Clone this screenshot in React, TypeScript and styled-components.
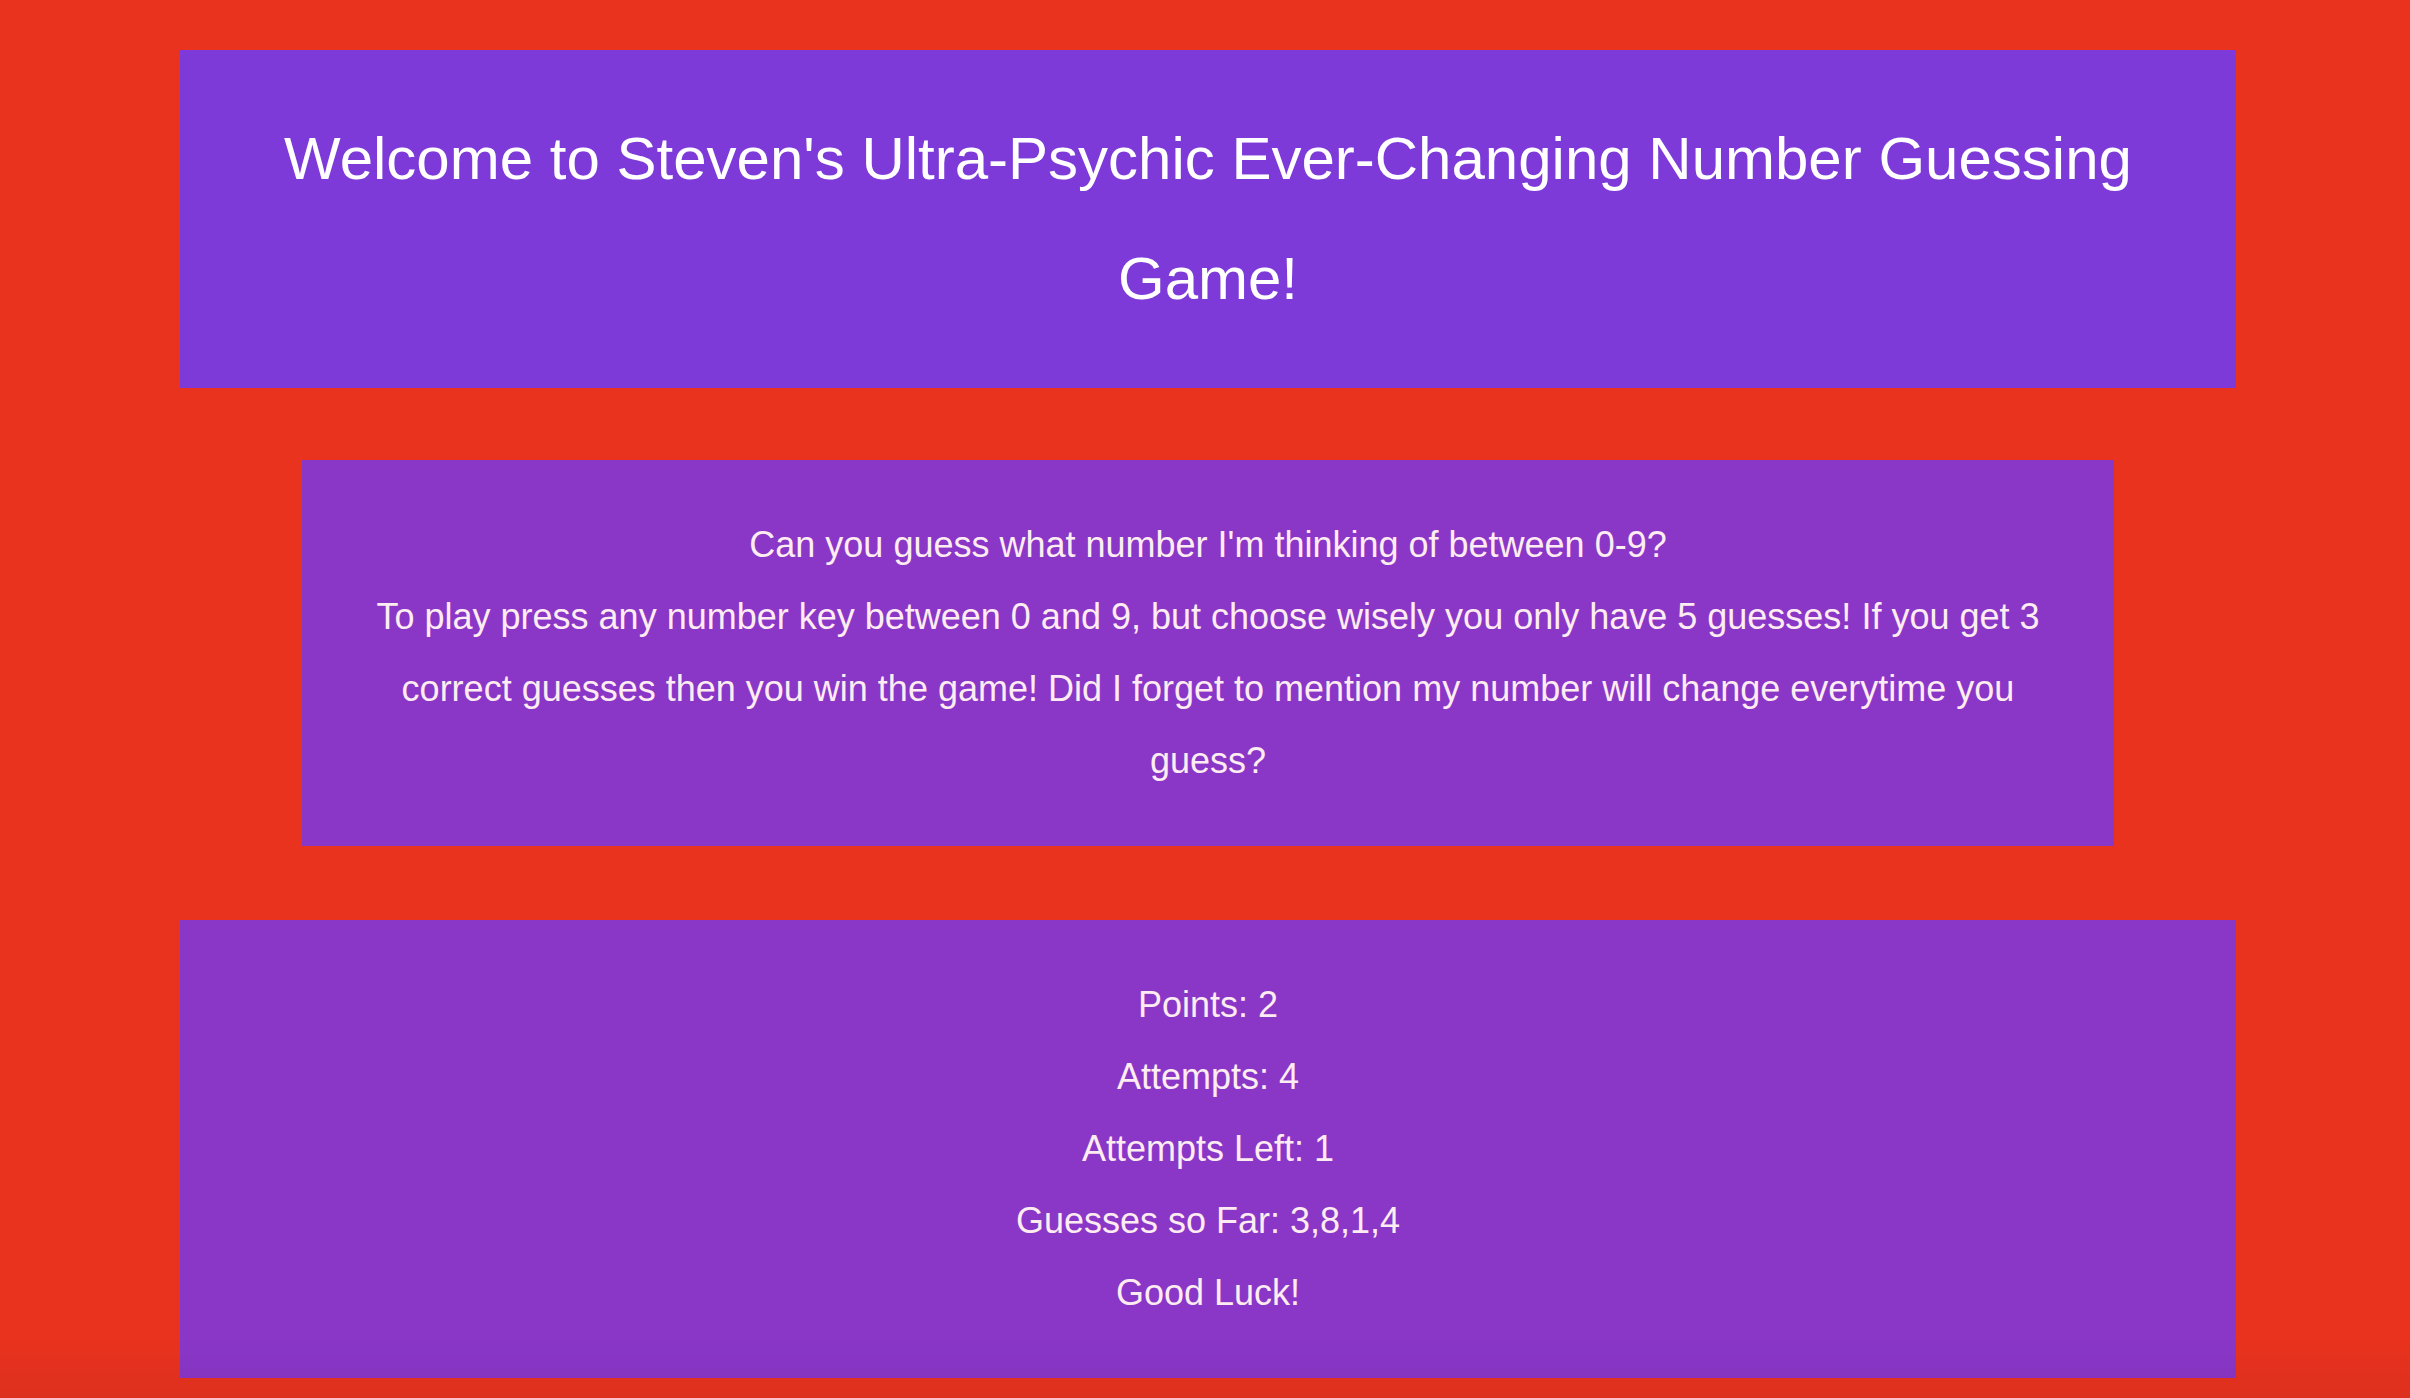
import React from "react";
import styled, { createGlobalStyle } from "styled-components";

const GlobalStyle = createGlobalStyle`
  html, body {
    margin: 0;
    padding: 0;
    background: #e9331f;
  }
  body {
    font-family: "Liberation Sans", Arial, Helvetica, sans-serif;
  }
`;

const Page = styled.main`
  display: flex;
  flex-direction: column;
  padding: 50px 174px 20px 180px;
  min-height: 1398px;
  box-sizing: border-box;
`;

const Banner = styled.header`
  background: #7d3ad9;
  padding: 49px 40px;
  text-align: center;
`;

const Title = styled.h1`
  margin: 0;
  font-size: 60px;
  font-weight: 400;
  line-height: 120px;
  color: #ffffff;
`;

const Panel = styled.section<{ $inset?: number; $gap: number }>`
  background: #8a37c8;
  margin: ${(p) => p.$gap}px ${(p) => p.$inset ?? 0}px 0;
  padding: 49px 48px;
  text-align: center;
  color: #fdecf1;
  font-size: 36px;
  line-height: 72px;
`;

const Line = styled.p`
  margin: 0;
`;

const BottomShade = styled.div`
  position: fixed;
  left: 0;
  right: 0;
  bottom: 0;
  height: 60px;
  pointer-events: none;
  background: linear-gradient(to bottom, rgba(0, 0, 0, 0), rgba(40, 0, 20, 0.06));
`;

const stats = [
  "Points: 2",
  "Attempts: 4",
  "Attempts Left: 1",
  "Guesses so Far: 3,8,1,4",
  "Good Luck!",
];

export default function App() {
  return (
    <>
      <GlobalStyle />
      <Page>
        <Banner>
          <Title>Welcome to Steven's Ultra-Psychic Ever-Changing Number Guessing Game!</Title>
        </Banner>
        <Panel $inset={122} $gap={72}>
          <Line>Can you guess what number I'm thinking of between 0-9?</Line>
          <Line>
            To play press any number key between 0 and 9, but choose wisely you only have 5
            guesses! If you get 3 correct guesses then you win the game! Did I forget to
            mention my number will change everytime you guess?
          </Line>
        </Panel>
        <Panel $gap={74}>
          {stats.map((s) => (
            <Line key={s}>{s}</Line>
          ))}
        </Panel>
      </Page>
      <BottomShade />
    </>
  );
}
